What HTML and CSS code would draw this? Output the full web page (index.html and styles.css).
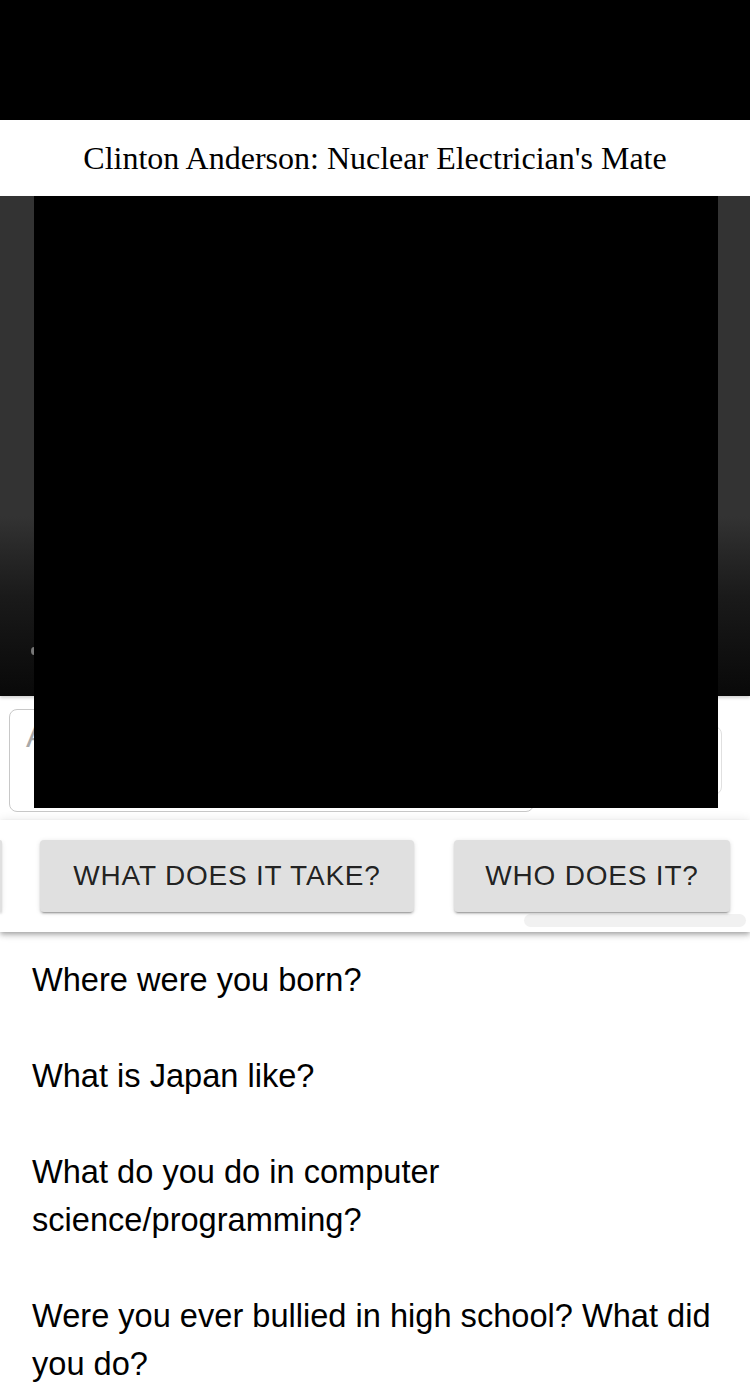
FILE: index.html
```html
<!DOCTYPE html>
<html lang="en">
<head>
<meta charset="utf-8">
<title>Clinton Anderson: Nuclear Electrician's Mate</title>
<link rel="stylesheet" href="styles.css">
</head>
<body>
<div class="page">
  <div class="topbar"></div>
  <header class="title-bar">
    <h1 class="title">Clinton Anderson: Nuclear Electrician's Mate</h1>
  </header>
  <section class="video">
    <span class="video-ctrl"></span>
  </section>
  <section class="ask">
    <div class="ask-input">Ask a question...</div>
    <div class="ask-send"></div>
  </section>
  <nav class="topics">
    <div class="topic-row">
      <button class="topic stub"></button>
      <button class="topic topic-take">WHAT DOES IT TAKE?</button>
      <button class="topic topic-who">WHO DOES IT?</button>
    </div>
    <div class="scroll-thumb"></div>
  </nav>
  <ul class="questions">
    <li class="question">Where were you born?</li>
    <li class="question">What is Japan like?</li>
    <li class="question">What do you do in computer science/programming?</li>
    <li class="question">Were you ever bullied in high school? What did you do?</li>
  </ul>
  <div class="redact"></div>
</div>
</body>
</html>
```

FILE: styles.css
```css
html, body {
  margin: 0;
  padding: 0;
  background: #fff;
}

.page {
  position: relative;
  width: 750px;
  min-height: 1400px;
  overflow: hidden;
  font-family: "Liberation Sans", Arial, sans-serif;
}

.topbar {
  height: 120px;
  background: #000;
}

.title-bar {
  height: 76px;
  display: flex;
  align-items: center;
  justify-content: center;
  background: #fff;
}

.title {
  margin: 0;
  font-family: "Liberation Serif", "Times New Roman", serif;
  font-weight: normal;
  font-size: 32px;
  line-height: 37px;
  color: #000;
}

.video {
  position: relative;
  height: 500px;
  background: linear-gradient(to bottom, #333 0%, #333 64%, #262626 72%, #1a1a1a 80%, #111 90%, #090909 100%);
  box-shadow: 0 2px 3px rgba(0, 0, 0, 0.18);
  z-index: 1;
}

.video-ctrl {
  position: absolute;
  left: 31px;
  top: 451px;
  width: 6px;
  height: 8px;
  border-radius: 50%;
  background: #777;
}

.ask {
  display: flex;
  align-items: center;
  padding: 13px 0 8px 9px;
}

.ask-input {
  box-sizing: border-box;
  width: 525px;
  height: 103px;
  border: 1.5px solid #c8c8c8;
  border-radius: 8px;
  padding: 8px 16px;
  font-size: 32px;
  color: #a8a8a8;
}

.ask-send {
  box-sizing: border-box;
  margin-left: 12px;
  width: 176px;
  height: 69px;
  border: 1.5px solid #e0e0e0;
  border-radius: 8px;
}

.topics {
  position: relative;
  z-index: 1;
  background: #fff;
  padding: 20px 0 5px;
  box-shadow: 0 2px 4px -1px rgba(0, 0, 0, 0.2), 0 4px 5px 0 rgba(0, 0, 0, 0.14), 0 1px 10px 0 rgba(0, 0, 0, 0.12);
}

.topic-row {
  display: flex;
  gap: 40px;
}

.topic {
  flex: none;
  box-sizing: border-box;
  height: 72px;
  padding: 0;
  border: none;
  border-radius: 4px;
  background: #e0e0e0;
  color: rgba(0, 0, 0, 0.87);
  font-family: "Liberation Sans", Arial, sans-serif;
  font-size: 28px;
  letter-spacing: 0.8px;
  text-align: center;
  box-shadow: 0 3px 1px -2px rgba(0, 0, 0, 0.2), 0 2px 2px 0 rgba(0, 0, 0, 0.14), 0 1px 5px 0 rgba(0, 0, 0, 0.12);
}

.topic-take {
  width: 374px;
}

.topic-who {
  width: 276px;
}

.topic.stub {
  width: 2px;
  margin-right: -2px;
  border-radius: 0 4px 4px 0;
}

.scroll-thumb {
  margin: 2px 0 0 524px;
  width: 222px;
  height: 13px;
  border-radius: 7px;
  background: #f1f1f1;
}

.questions {
  list-style: none;
  margin: 0;
  padding: 0;
}

.question {
  padding: 24px 32px;
  font-size: 32.6px;
  line-height: 48px;
  color: #000;
}

.redact {
  position: absolute;
  left: 34px;
  top: 196px;
  width: 684px;
  height: 612px;
  background: #000;
  z-index: 5;
}
```
